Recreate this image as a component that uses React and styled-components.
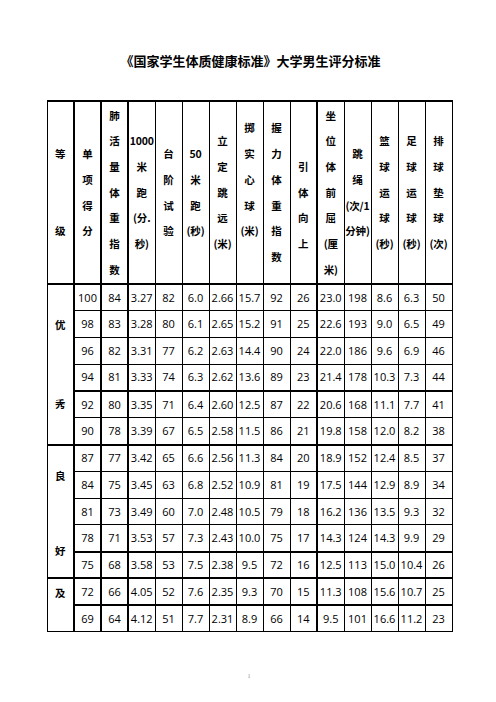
import styled, { createGlobalStyle } from 'styled-components';

const GlobalStyle = createGlobalStyle`
  html, body {
    margin: 0;
    padding: 0;
    background: #fff;
  }
  body {
    font-family: "Open Sans", "Noto Sans CJK SC", sans-serif;
    color: #000;
  }
`;

const ROW_H = 26.77;

const headers = [
  ['等', '', '', '级'],
  ['单', '项', '得', '分'],
  ['肺', '活', '量', '体', '重', '指', '数'],
  ['1000', '米', '跑', '(分.', '秒)'],
  ['台', '阶', '试', '验'],
  ['50', '米', '跑', '(秒)'],
  ['立', '定', '跳', '远', '(米)'],
  ['掷', '实', '心', '球', '(米)', ''],
  ['握', '力', '体', '重', '指', '数'],
  ['', '引', '体', '向', '上'],
  ['坐', '位', '体', '前', '屈', '(厘', '米)'],
  ['跳', '绳', '(次/1', '分钟)'],
  ['篮', '球', '运', '球', '(秒)'],
  ['足', '球', '运', '球', '(秒)'],
  ['排', '球', '垫', '球', '(次)'],
];

const rows = [
  ['100', '84', '3.27', '82', '6.0', '2.66', '15.7', '92', '26', '23.0', '198', '8.6', '6.3', '50'],
  ['98', '83', '3.28', '80', '6.1', '2.65', '15.2', '91', '25', '22.6', '193', '9.0', '6.5', '49'],
  ['96', '82', '3.31', '77', '6.2', '2.63', '14.4', '90', '24', '22.0', '186', '9.6', '6.9', '46'],
  ['94', '81', '3.33', '74', '6.3', '2.62', '13.6', '89', '23', '21.4', '178', '10.3', '7.3', '44'],
  ['92', '80', '3.35', '71', '6.4', '2.60', '12.5', '87', '22', '20.6', '168', '11.1', '7.7', '41'],
  ['90', '78', '3.39', '67', '6.5', '2.58', '11.5', '86', '21', '19.8', '158', '12.0', '8.2', '38'],
  ['87', '77', '3.42', '65', '6.6', '2.56', '11.3', '84', '20', '18.9', '152', '12.4', '8.5', '37'],
  ['84', '75', '3.45', '63', '6.8', '2.52', '10.9', '81', '19', '17.5', '144', '12.9', '8.9', '34'],
  ['81', '73', '3.49', '60', '7.0', '2.48', '10.5', '79', '18', '16.2', '136', '13.5', '9.3', '32'],
  ['78', '71', '3.53', '57', '7.3', '2.43', '10.0', '75', '17', '14.3', '124', '14.3', '9.9', '29'],
  ['75', '68', '3.58', '53', '7.5', '2.38', '9.5', '72', '16', '12.5', '113', '15.0', '10.4', '26'],
  ['72', '66', '4.05', '52', '7.6', '2.35', '9.3', '70', '15', '11.3', '108', '15.6', '10.7', '25'],
  ['69', '64', '4.12', '51', '7.7', '2.31', '8.9', '66', '14', '9.5', '101', '16.6', '11.2', '23'],
];

// grade label cells: which row they start on, how many rows they span, chars and paddings
const grades = {
  0: { span: 6, chars: ['优', '秀'], top: 33, bottom: 33 },
  6: { span: 5, chars: ['良', '好'], top: 23, bottom: 19 },
  11: { span: 2, chars: ['及'], top: 6.4, bottom: 0 },
};

// rows whose top line is drawn heavier
const heavyTop = new Set([0, 4, 6, 10, 11, 12]);
// columns whose right line is drawn heavier
const heavyRight = new Set([0, 1, 2, 9]);

const Page = styled.div`
  width: 496px;
  min-height: 702px;
  display: flex;
  flex-direction: column;
  align-items: center;
`;

const Title = styled.h1`
  margin: 51px 0 29px 0;
  font-family: "Noto Sans CJK SC", "Noto Sans", sans-serif;
  font-size: 13px;
  font-weight: 700;
  line-height: 20px;
  letter-spacing: 0;
  text-align: center;
  padding-left: 5px;
`;

const Sheet = styled.table`
  table-layout: fixed;
  border-collapse: collapse;
  width: 405px;
  margin-left: 3px;
  border-top: 2px solid #000;
  border-left: 1px solid #000;
  border-right: 1px solid #000;
  border-bottom: 1px solid #000;
`;

const Col = styled.col`
  width: 27px;
`;

const HeadCell = styled.th`
  height: 181px;
  padding: 0;
  vertical-align: middle;
  text-align: center;
  border: 1px solid #000;
  border-right-width: ${({ $heavy }) => ($heavy ? '2px' : '1px')};
  border-bottom: 2px solid #000;
  font-family: "Noto Sans CJK SC", "Noto Sans", sans-serif;
  font-size: 10.5px;
  font-weight: 700;
  white-space: nowrap;
`;

const HeadLine = styled.div`
  height: 25.7px;
  line-height: 25.7px;
  letter-spacing: -0.2px;
`;

const DataRow = styled.tr`
  height: ${ROW_H}px;
`;

const Cell = styled.td`
  padding: 0;
  text-align: center;
  vertical-align: middle;
  font-family: "Open Sans", "Liberation Sans", sans-serif;
  font-size: 11px;
  line-height: 14px;
  white-space: nowrap;
  border: 1px solid #000;
  border-top-width: ${({ $heavyTop }) => ($heavyTop ? '2px' : '1px')};
  border-right-width: ${({ $heavy }) => ($heavy ? '2px' : '1px')};
`;

const GradeCell = styled.td`
  padding: 0;
  vertical-align: top;
  border: 1px solid #000;
  border-top-width: 2px;
  border-right-width: 2px;
`;

const GradeStack = styled.div`
  box-sizing: border-box;
  height: ${({ $h }) => $h}px;
  padding: ${({ $top }) => $top}px 0 ${({ $bottom }) => $bottom}px 0;
  display: flex;
  flex-direction: column;
  align-items: center;
  justify-content: ${({ $single }) => ($single ? 'flex-start' : 'space-between')};
  font-family: "Noto Sans CJK SC", "Noto Sans", sans-serif;
  font-size: 10.5px;
  font-weight: 700;
  line-height: 14px;
`;

const PageNumber = styled.div`
  margin-top: 40px;
  font-family: "Liberation Serif", serif;
  font-size: 7px;
  color: #9a9a9a;
  padding-left: 2px;
`;

export default function App() {
  return (
    <>
      <GlobalStyle />
      <Page>
        <Title>《国家学生体质健康标准》大学男生评分标准</Title>
        <Sheet>
          <colgroup>
            {headers.map((_, i) => (
              <Col key={i} />
            ))}
          </colgroup>
          <thead>
            <tr>
              {headers.map((lines, i) => (
                <HeadCell key={i} $heavy={heavyRight.has(i)}>
                  {lines.map((t, j) => (
                    <HeadLine key={j}>{t || '\u00a0'}</HeadLine>
                  ))}
                </HeadCell>
              ))}
            </tr>
          </thead>
          <tbody>
            {rows.map((row, r) => {
              const g = grades[r];
              return (
                <DataRow key={r}>
                  {g && (
                    <GradeCell rowSpan={g.span}>
                      <GradeStack
                        $h={g.span * ROW_H - 2}
                        $top={g.top}
                        $bottom={g.bottom}
                        $single={g.chars.length === 1}
                      >
                        {g.chars.map((c) => (
                          <span key={c}>{c}</span>
                        ))}
                      </GradeStack>
                    </GradeCell>
                  )}
                  {row.map((v, c) => (
                    <Cell key={c} $heavyTop={heavyTop.has(r)} $heavy={heavyRight.has(c + 1)}>
                      {v}
                    </Cell>
                  ))}
                </DataRow>
              );
            })}
          </tbody>
        </Sheet>
        <PageNumber>1</PageNumber>
      </Page>
    </>
  );
}
